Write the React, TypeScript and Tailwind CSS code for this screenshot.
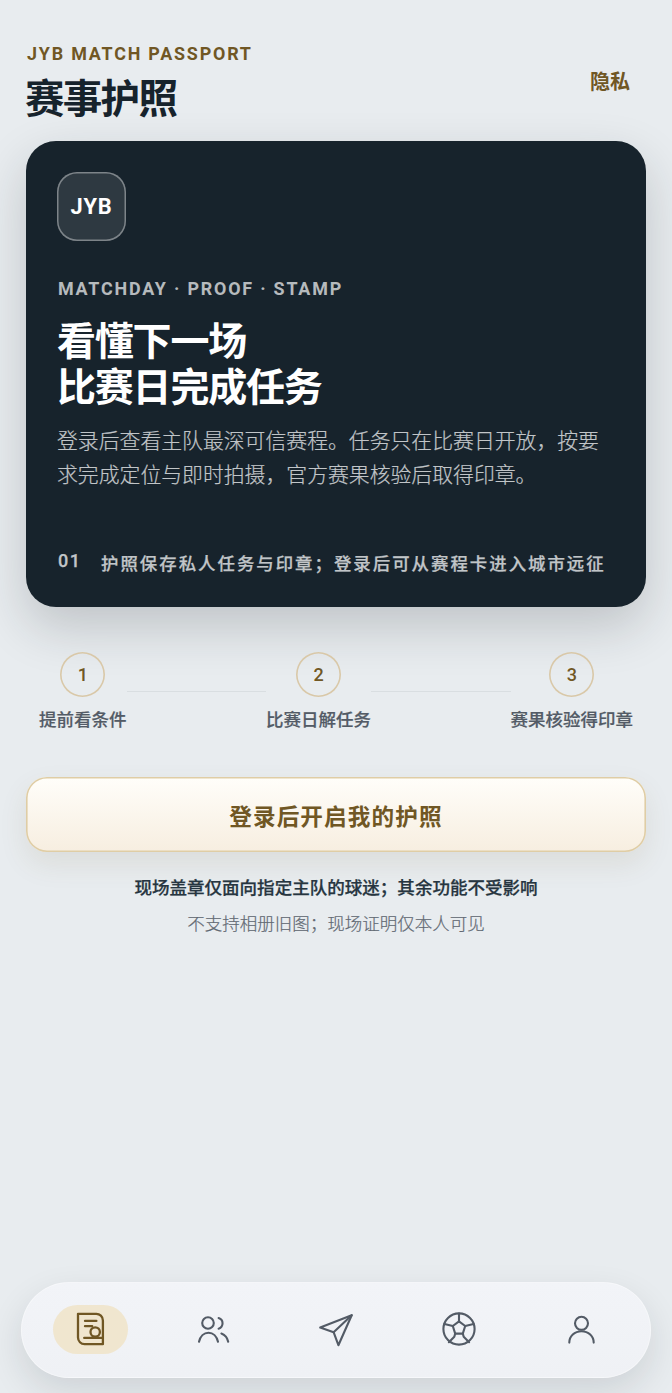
import { Fragment, type ReactNode } from "react";
import clsx from "clsx";

const steps = [
  { number: "1", label: "提前看条件" },
  { number: "2", label: "比赛日解任务" },
  { number: "3", label: "赛果核验得印章" },
];

function Icon({ children, weight = 2.1 }: { children: ReactNode; weight?: number }) {
  return (
    <svg
      viewBox="0 0 40 40"
      className="h-10 w-10 shrink-0"
      fill="none"
      stroke="currentColor"
      strokeWidth={weight}
      strokeLinecap="round"
      strokeLinejoin="round"
      aria-hidden="true"
    >
      {children}
    </svg>
  );
}

const tabs = [
  {
    name: "passport",
    icon: (
      <Icon weight={2.3}>
        <path d="M8 4.8H26a6.6 6.6 0 0 1 6.9 6.6V35.2H14.6a6.6 6.6 0 0 1-6.6-6.6Z" />
        <path d="M15 11.9h11.4M15 17.2h7.2M14.2 28.9h18.2" />
        <circle cx="25.2" cy="23" r="4.7" />
      </Icon>
    ),
  },
  {
    name: "friends",
    icon: (
      <Icon>
        <circle cx="15" cy="14" r="5.8" />
        <path d="M6 32.7c1.2-5.3 4.9-9 9.5-9s8.3 3.7 9.5 9" />
        <path d="M25.6 9a5.6 5.6 0 0 1 0 10.7M28.4 24.5c3.5 1.4 6 4.3 6.8 8.2" />
      </Icon>
    ),
  },
  {
    name: "explore",
    icon: (
      <Icon>
        <path d="M35.7 6.2 4.2 18.6 17.6 23.2 22.4 36.2Z" />
        <path d="M35.7 6.2 17.6 23.2" />
      </Icon>
    ),
  },
  {
    name: "matches",
    icon: (
      <Icon>
        <circle cx="20" cy="20" r="15.6" />
        <path d="m20 12.4 6.2 4.6-2.4 7.6h-7.6L13.8 17Z" />
        <path d="M20 4.6v7.8M26.2 17l8.4-2M23.8 24.6l.9 3.2 5.4 5.4M16.2 24.6l-.9 3.2-5.4 5.4M13.8 17l-8.4-2" />
      </Icon>
    ),
  },
  {
    name: "profile",
    icon: (
      <Icon>
        <circle cx="19.5" cy="14.3" r="6.5" />
        <path d="M7.3 33.6c0-6.4 5.2-11.4 12.2-11.4s12.2 5 12.2 11.4" />
      </Icon>
    ),
  },
];

function Header() {
  return (
    <header className="flex h-[141px] items-start justify-between pt-[43px]">
      <div>
        <p className="ml-px text-[17.9px] leading-[22px] font-bold tracking-[1.8px] text-[#705724]">
          JYB MATCH PASSPORT
        </p>
        <h1 className="mt-[11px] -ml-px text-[39.5px] leading-[48px] font-bold tracking-[-1.7px] text-[#17232c]">
          赛事护照
        </h1>
      </div>
      <button type="button" className="mt-[24px] mr-4 text-[20px] leading-[30px] font-bold text-[#705724]">
        隐私
      </button>
    </header>
  );
}

function PassportCard() {
  return (
    <section className="flex h-[466px] flex-col rounded-[30px] bg-[#17232c] px-[31px] pt-[31px] shadow-[0_20px_50px_rgba(30,36,42,0.2)]">
      <div className="flex h-[69px] w-[69px] items-center justify-center rounded-[20px] bg-white/10 pt-px text-[21.8px] font-bold tracking-[0.8px] text-white shadow-[inset_0_0_0_1.5px_rgba(255,255,255,0.38)]">
        JYB
      </div>
      <p className="mt-[37px] ml-px text-[17.9px] leading-[22px] font-bold tracking-[1.8px] text-white/70">
        MATCHDAY · PROOF · STAMP
      </p>
      <h2 className="mt-[20px] text-[39px] leading-[45.5px] font-bold tracking-[-1.2px] whitespace-nowrap text-white">
        看懂下一场
        <br />
        比赛日完成任务
      </h2>
      <p className="mt-[13px] w-[560px] text-[20.85px] leading-[34px] font-light text-[#c1c5c8] [-webkit-text-stroke:0.2px_#c1c5c8]">
        登录后查看主队最深可信赛程。任务只在比赛日开放，按要
        <br />
        求完成定位与即时拍摄，官方赛果核验后取得印章。
      </p>
      <div className="mt-[56px] flex items-start whitespace-nowrap text-[17.4px] leading-[26px] font-medium text-[#c1c5c8] [-webkit-text-stroke:0.25px_#c1c5c8]">
        <span className="ml-px w-[43px] text-[18px] tracking-[1.4px]">01</span>
        <span className="mt-[3px] tracking-[2.02px]">护照保存私人任务与印章；登录后可从赛程卡进入城市远征</span>
      </div>
    </section>
  );
}

function Steps() {
  return (
    <div className="mx-[13px] mt-[45px] flex h-[80px] items-center">
      {steps.map((step, index) => (
        <Fragment key={step.number}>
          {index > 0 && <span className="mb-px h-px flex-1 bg-[#d9dee1]" />}
          <div className="flex flex-col items-center">
            <span className="flex h-[45px] w-[45px] items-center justify-center rounded-full text-[18px] font-medium text-[#705724] shadow-[inset_0_0_0_1.6px_#d9c8a8]">
              {step.number}
            </span>
            <span className="mt-[10px] whitespace-nowrap text-[17.5px] leading-[26px] font-medium text-[#535b66] [-webkit-text-stroke:0.2px_#535b66]">
              {step.label}
            </span>
          </div>
        </Fragment>
      ))}
    </div>
  );
}

function TabBar() {
  return (
    <nav className="mx-[21px] mt-auto mb-[15px] flex h-[96px] items-center rounded-full border border-white/40 bg-linear-to-b from-[#f2f4f8] to-[#eff1f5] px-[7px] pb-[2px] shadow-[0_14px_35px_rgba(23,35,44,0.12)]">
      {tabs.map((tab, index) => (
        <button
          key={tab.name}
          type="button"
          aria-label={tab.name}
          className={clsx("flex flex-1 justify-center", index === 0 ? "text-[#705724]" : "text-[#535b66]")}
        >
          <span
            className={clsx(
              "flex h-[49px] w-[75px] items-center justify-center rounded-full",
              index === 0 && "bg-[#f0e6cf]"
            )}
          >
            {tab.icon}
          </span>
        </button>
      ))}
    </nav>
  );
}

export default function App() {
  return (
    <div className="flex h-[1393px] w-[672px] flex-col overflow-hidden bg-[#e8ecef] font-[Roboto,'Noto_Sans_CJK_SC',sans-serif]">
      <main className="px-[26px]">
        <Header />
        <PassportCard />
        <Steps />
        <button
          type="button"
          className="mt-[45px] flex h-[75px] w-full items-center justify-center rounded-[21px] bg-linear-to-b from-[#fffefa] to-[#f7eee0] pt-[6px] text-[22.6px] font-bold tracking-[1.15px] text-[#705724] shadow-[inset_0_0_0_1.6px_#dfcda5,0_12px_28px_rgba(112,87,36,0.1)]"
        >
          登录后开启我的护照
        </button>
        <p className="mt-[23px] text-center text-[17.55px] leading-[26px] font-medium text-[#263540] [-webkit-text-stroke:0.25px_#263540]">
          现场盖章仅面向指定主队的球迷；其余功能不受影响
        </p>
        <p className="mt-[10px] text-center text-[17.5px] leading-[26px] font-light text-[#626973] [-webkit-text-stroke:0.2px_#626973]">
          不支持相册旧图；现场证明仅本人可见
        </p>
      </main>
      <TabBar />
    </div>
  );
}
